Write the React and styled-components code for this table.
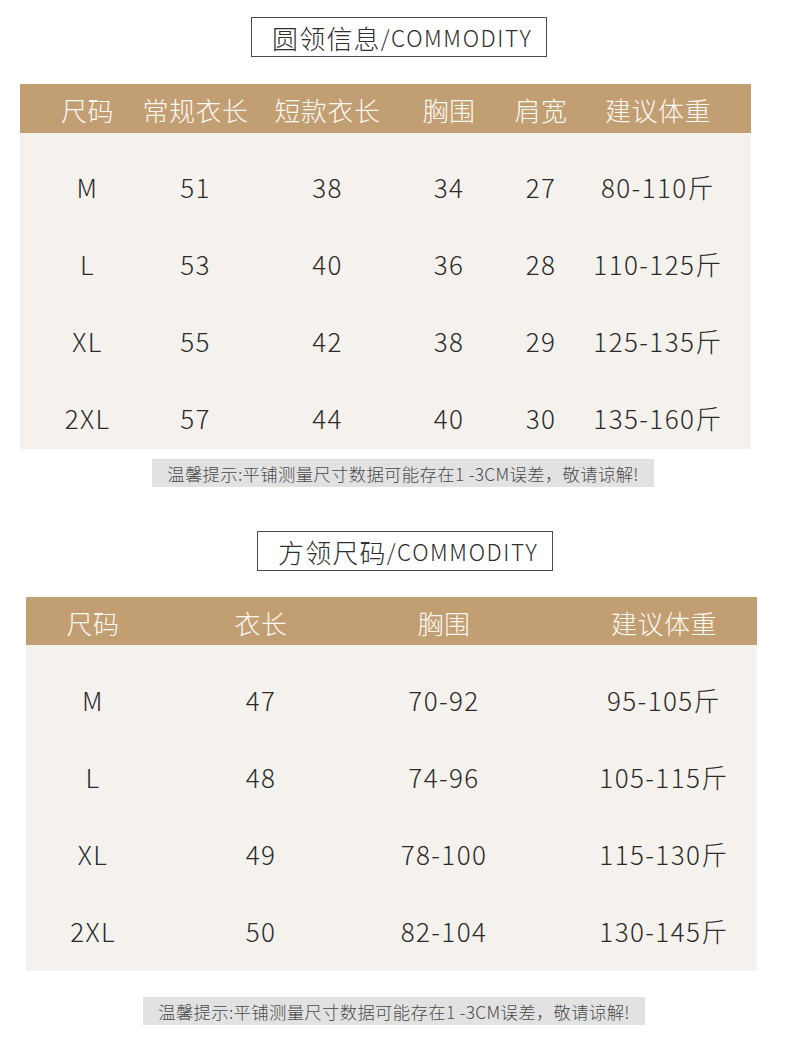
import styled, { createGlobalStyle } from "styled-components";

const GlobalStyle = createGlobalStyle`
  html, body {
    margin: 0;
    padding: 0;
    background: #ffffff;
  }
  body {
    font-family: "Noto Sans CJK SC", "Noto Sans", sans-serif;
  }
`;

const Page = styled.div`
  width: 790px;
  height: 1053px;
  padding-top: 17px;
  box-sizing: border-box;
  display: flex;
  flex-direction: column;
  align-items: flex-start;
`;

const Section = styled.section`
  display: flex;
  flex-direction: column;
  align-items: flex-start;
  margin-top: ${(props) => props.top || 0}px;
`;

const TitleBox = styled.div`
  height: 40px;
  box-sizing: border-box;
  margin-left: ${(props) => props.left}px;
  padding: 0 14px 0 20px;
  border: 1px solid #4a4a4a;
  display: flex;
  align-items: center;
  color: #2e2e2e;
  font-weight: 300;
  white-space: nowrap;
`;

const TitleCn = styled.span`
  font-size: 26px;
  letter-spacing: 1.2px;
`;

const TitleEn = styled.span`
  font-size: 22.5px;
  letter-spacing: 1.6px;
`;

const Table = styled.div`
  width: 731px;
  margin-left: ${(props) => props.left}px;
  margin-top: ${(props) => props.gap}px;
`;

const Row = styled.div`
  display: grid;
  grid-template-columns: ${(props) => props.cols};
  align-items: center;
  height: ${(props) => props.h}px;
`;

const HeadRow = styled(Row)`
  background: #c29e73;
  color: #fdf9f2;
  font-size: 26px;
  font-weight: 300;
  letter-spacing: 0.5px;
  padding-top: 3px;
  box-sizing: border-box;
`;

const Body = styled.div`
  background: #f5f2ed;
  display: flex;
  flex-direction: column;
  gap: 15px;
  padding: ${(props) => props.pt}px 0 ${(props) => props.pb}px;
`;

const DataRow = styled(Row)`
  color: #2a2a2a;
  font-size: 26px;
  font-weight: 300;
  letter-spacing: 1.4px;
`;

const Cell = styled.div`
  display: flex;
  justify-content: center;
  white-space: nowrap;
  line-height: 1;
`;

const Note = styled.div`
  width: 502px;
  height: 28px;
  box-sizing: border-box;
  margin-left: ${(props) => props.left}px;
  margin-top: ${(props) => props.gap}px;
  background: #e2e2e2;
  color: #4a4a4a;
  font-size: 17.4px;
  font-weight: 300;
  letter-spacing: 0.3px;
  display: flex;
  align-items: center;
  justify-content: center;
  white-space: nowrap;
`;

const NOTE = "温馨提示:平铺测量尺寸数据可能存在1 -3CM误差，敬请谅解!";

const round = {
  cols: "135px 81px 183px 60px 124px 110px",
  head: ["尺码", "常规衣长", "短款衣长", "胸围", "肩宽", "建议体重"],
  rows: [
    ["M", "51", "38", "34", "27", "80-110斤"],
    ["L", "53", "40", "36", "28", "110-125斤"],
    ["XL", "55", "42", "38", "29", "125-135斤"],
    ["2XL", "57", "44", "40", "30", "135-160斤"],
  ],
};

const square = {
  cols: "134px 202px 164px 276px",
  head: ["尺码", "衣长", "胸围", "建议体重"],
  rows: [
    ["M", "47", "70-92", "95-105斤"],
    ["L", "48", "74-96", "105-115斤"],
    ["XL", "49", "78-100", "115-130斤"],
    ["2XL", "50", "82-104", "130-145斤"],
  ],
};

function SizeTable({ data, left, gap, headH, pt, pb }) {
  return (
    <Table left={left} gap={gap}>
      <HeadRow cols={data.cols} h={headH}>
        {data.head.map((h) => (
          <Cell key={h}>{h}</Cell>
        ))}
      </HeadRow>
      <Body pt={pt} pb={pb}>
        {data.rows.map((r) => (
          <DataRow key={r[0]} cols={data.cols} h={62}>
            {r.map((v, i) => (
              <Cell key={i}>{v}</Cell>
            ))}
          </DataRow>
        ))}
      </Body>
    </Table>
  );
}

export default function App() {
  return (
    <>
      <GlobalStyle />
      <Page>
        <Section>
          <TitleBox left={251}>
            <TitleCn>圆领信息</TitleCn>
            <TitleEn>/COMMODITY</TitleEn>
          </TitleBox>
          <SizeTable data={round} left={20} gap={27} headH={49} pt={23} pb={0} />
          <Note left={152} gap={10}>{NOTE}</Note>
        </Section>
        <Section top={44}>
          <TitleBox left={257}>
            <TitleCn>方领尺码</TitleCn>
            <TitleEn>/COMMODITY</TitleEn>
          </TitleBox>
          <SizeTable data={square} left={26} gap={26} headH={48} pt={24} pb={9} />
          <Note left={143} gap={26}>{NOTE}</Note>
        </Section>
      </Page>
    </>
  );
}
